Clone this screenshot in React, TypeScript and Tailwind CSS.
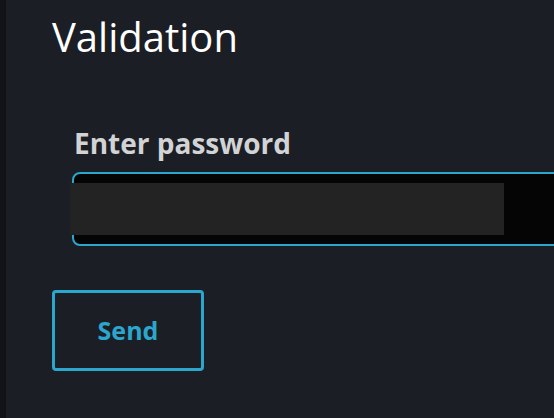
export default function App() {
  return (
    <div
      className="flex h-[418px] w-[554px] overflow-hidden bg-[#1b1e25]"
      style={{ fontFamily: '"Open Sans", "Noto Sans", sans-serif' }}
    >
      <div className="w-[6px] shrink-0 bg-[#111318]" />

      <div className="flex min-w-0 flex-1 flex-col pl-[46px] pt-[14px]">
        <h1 className="text-[40px] leading-[46px] font-normal text-white">Validation</h1>

        <form className="mt-[67px] flex flex-col">
          <div className="flex flex-col pl-[20px]">
            <label className="pl-[2px] text-[28px] leading-[32px] font-bold text-[#d2d3d5]">
              Enter password
            </label>

            <div className="relative mt-[13px] h-[74px] w-[560px] shrink-0 rounded-[8px] border-2 border-[#2ba6cc] bg-[#050505]">
              <div className="absolute left-[-4px] top-[9px] h-[52px] w-[434px] bg-[#232323]" />
            </div>
          </div>

          <button
            type="button"
            className="mt-[44px] flex h-[81px] w-[152px] items-center justify-center rounded-[4px] border-[3px] border-[#2ba6cc] text-[25px] font-bold text-[#2ba6cc]"
          >
            Send
          </button>
        </form>
      </div>
    </div>
  );
}
